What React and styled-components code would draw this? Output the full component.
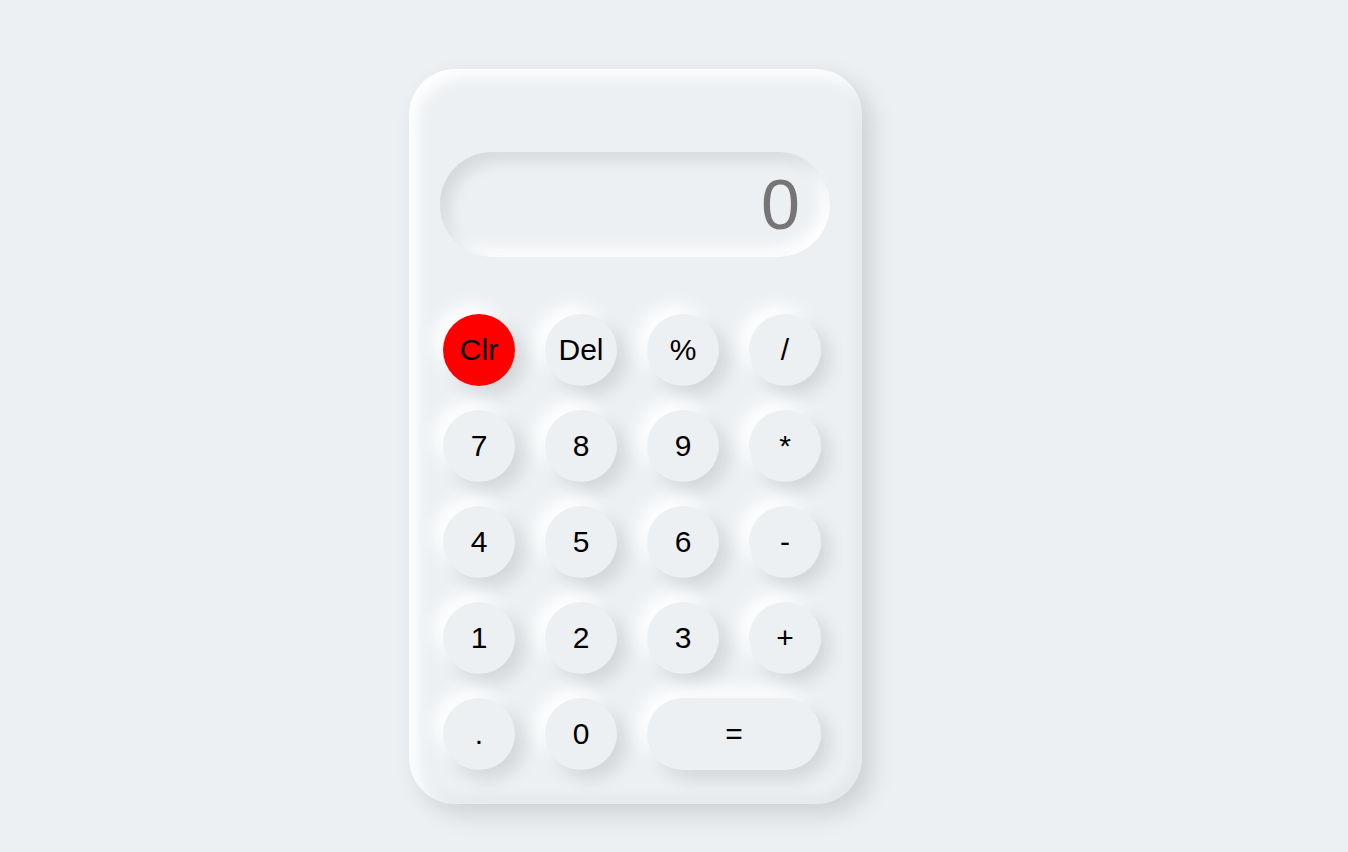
import React, { useState } from "react";
import styled, { createGlobalStyle } from "styled-components";

const GlobalStyle = createGlobalStyle`
  html, body {
    margin: 0;
    padding: 0;
    background: #ecf0f3;
    font-family: "Liberation Sans", Arial, sans-serif;
  }
`;

const Page = styled.div`
  min-height: 852px;
  display: flex;
  align-items: flex-start;
  padding: 69px 0 0 409px;
  box-sizing: border-box;
`;

const Card = styled.div`
  width: 453px;
  height: 735px;
  box-sizing: border-box;
  padding: 83px 32px 0 31px;
  border-radius: 46px;
  background: #ecf0f3;
  box-shadow: inset 8px 8px 16px #ffffff, inset -6px -6px 14px rgba(0, 0, 0, 0.04),
    10px 10px 24px rgba(0, 0, 0, 0.13);
  display: flex;
  flex-direction: column;
`;

const Display = styled.div`
  height: 105px;
  border-radius: 52px;
  background: #ecf0f3;
  box-shadow: inset 8px 8px 16px rgba(0, 0, 0, 0.1), inset -8px -8px 16px #ffffff;
  display: flex;
  align-items: center;
  justify-content: flex-end;
  padding: 0 30px;
  font-size: 70px;
  color: #757575;
  overflow: hidden;
`;

const Keys = styled.div`
  margin: 57px 0 0 3px;
  display: grid;
  grid-template-columns: repeat(4, 72px);
  grid-auto-rows: 72px;
  column-gap: 30px;
  row-gap: 24px;
`;

const Key = styled.button`
  grid-column: span ${(p) => (p.$wide ? 2 : 1)};
  border: none;
  border-radius: 36px;
  background: ${(p) => (p.$danger ? "#ff0000" : "#ecf0f3")};
  box-shadow: 9px 9px 18px rgba(0, 0, 0, 0.11), -9px -9px 18px #ffffff;
  font-family: "Liberation Sans", Arial, sans-serif;
  font-size: 30px;
  color: #000;
  cursor: pointer;
  padding: 0;
  outline: none;
`;

const keys = [
  { label: "Clr", danger: true },
  { label: "Del" },
  { label: "%" },
  { label: "/" },
  { label: "7" },
  { label: "8" },
  { label: "9" },
  { label: "*" },
  { label: "4" },
  { label: "5" },
  { label: "6" },
  { label: "-" },
  { label: "1" },
  { label: "2" },
  { label: "3" },
  { label: "+" },
  { label: "." },
  { label: "0" },
  { label: "=", wide: true },
];

const App = () => {
  const [value, setValue] = useState("0");

  const onPress = (label) => {
    if (label === "Clr") return setValue("0");
    if (label === "Del") return setValue((v) => (v.length > 1 ? v.slice(0, -1) : "0"));
    if (label === "=") {
      try {
        // eslint-disable-next-line no-new-func
        const result = Function(`return (${value.replace(/%/g, "/100")})`)();
        setValue(String(result));
      } catch (e) {
        setValue("0");
      }
      return;
    }
    setValue((v) => (v === "0" && label !== "." ? label : v + label));
  };

  return (
    <>
      <GlobalStyle />
      <Page>
        <Card>
          <Display>{value}</Display>
          <Keys>
            {keys.map((k) => (
              <Key key={k.label} $danger={k.danger} $wide={k.wide} onClick={() => onPress(k.label)}>
                {k.label}
              </Key>
            ))}
          </Keys>
        </Card>
      </Page>
    </>
  );
};

export default App;
